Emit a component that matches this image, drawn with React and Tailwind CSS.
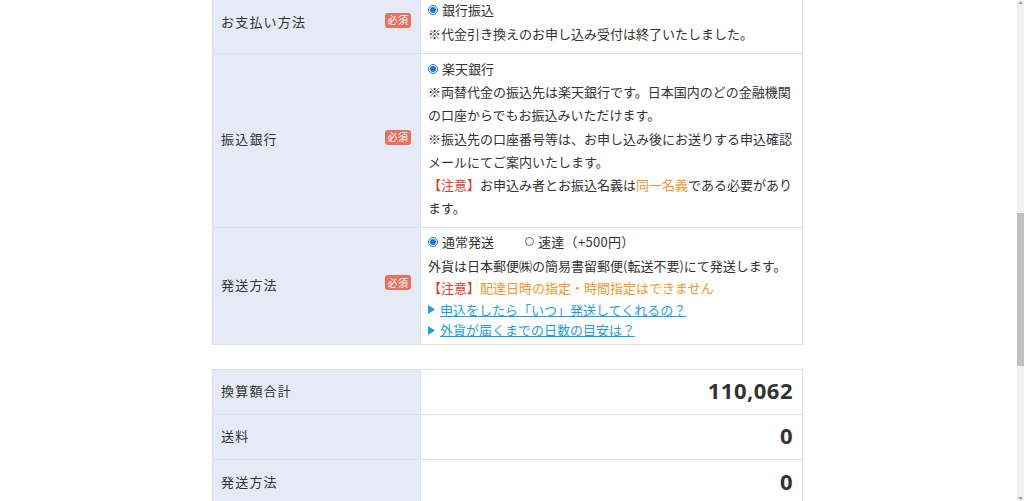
import React from "react";

function Badge() {
  return (
    <span className="flex h-[15px] w-[26px] items-center justify-center rounded-[3px] bg-[#e8705f] text-[10px] leading-none tracking-[0.5px] text-white mb-[3px]">
      必須
    </span>
  );
}

function Radio({ checked }) {
  if (checked) {
    return (
      <span className="mr-[4px] inline-flex h-[10px] w-[10px] shrink-0 items-center justify-center rounded-full border border-[#1a73e8] bg-white">
        <span className="h-[6px] w-[6px] rounded-full bg-[#1a73e8]" />
      </span>
    );
  }
  return <span className="mr-[4px] inline-block h-[9px] w-[9px] shrink-0 rounded-full border border-[#666] bg-white" />;
}

function Label({ children }) {
  return (
    <div className="flex w-[207px] shrink-0 items-center justify-between bg-[#e5eaf6] pb-[4px] pl-[8px] pr-[9px] text-[13px] tracking-[1.2px] text-[#333]">
      <span>{children}</span>
      <Badge />
    </div>
  );
}

function Tri() {
  return (
    <svg width="7" height="9" viewBox="0 0 7 9" className="mr-[5px] shrink-0">
      <path d="M0 0 L7 4.5 L0 9 Z" fill="#1e9fe0" />
    </svg>
  );
}

function SumRow({ label, value, last }) {
  return (
    <div className={"flex h-[45px] " + (last ? "" : "border-b border-[#dde0e5]")}>
      <div className="flex w-[207px] shrink-0 items-center bg-[#e5eaf6] pb-[3px] pl-[8px] text-[13px] tracking-[1.2px] text-[#333]">
        {label}
      </div>
      <div className="flex flex-1 items-center justify-end border-l border-[#dde0e5] pb-[3px] pr-[9px] font-['Open_Sans',sans-serif] text-[22px] font-bold tracking-[0.5px] text-[#333]">
        {value}
      </div>
    </div>
  );
}

export default function App() {
  return (
    <div className="flex h-[501px] w-[1024px] overflow-hidden bg-white font-['Noto_Sans_CJK_JP',sans-serif] text-[#333]">
      <div className="flex-1 pr-[2px]">
        <div className="mx-auto mt-[-7px] w-[591px]">
          <div className="border border-[#dde0e5]">
            <div className="flex border-b border-[#dde0e5]">
              <Label>お支払い方法</Label>
              <div className="flex-1 border-l border-[#dde0e5] pt-[4px] pb-[8px] pl-[7px] pr-[6px] text-[13px] leading-[23.5px]">
                <div className="flex items-center">
                  <Radio checked />
                  <span>銀行振込</span>
                </div>
                <div>※代金引き換えのお申し込み受付は終了いたしました。</div>
              </div>
            </div>
            <div className="flex border-b border-[#dde0e5]">
              <Label>振込銀行</Label>
              <div className="flex-1 border-l border-[#dde0e5] pt-[3px] pb-[8px] pl-[7px] pr-[6px] text-[13px] leading-[23.2px]">
                <div className="flex items-center">
                  <Radio checked />
                  <span>楽天銀行</span>
                </div>
                <div>
                  ※両替代金の振込先は楽天銀行です。日本国内のどの金融機関
                  <br />
                  の口座からでもお振込みいただけます。
                </div>
                <div>
                  ※振込先の口座番号等は、お申し込み後にお送りする申込確認
                  <br />
                  メールにてご案内いたします。
                </div>
                <div>
                  <span className="text-[#e53a2f]">【注意】</span>お申込み者とお振込名義は
                  <span className="text-[#f5962e]">同一名義</span>である必要があり
                  <br />
                  ます。
                </div>
              </div>
            </div>
            <div className="flex">
              <Label>発送方法</Label>
              <div className="flex-1 border-l border-[#dde0e5] pt-[1px] pb-[4px] pl-[7px] pr-[6px] text-[13px]">
                <div className="flex h-[25px] items-center">
                  <Radio checked />
                  <span>通常発送</span>
                  <span className="ml-[31px] flex items-center">
                    <Radio />
                    <span className="tracking-[0.3px]">速達（+500円）</span>
                  </span>
                </div>
                <div className="leading-[23px]">外貨は日本郵便㈱の簡易書留郵便(転送不要)にて発送します。</div>
                <div className="leading-[22px]">
                  <span className="text-[#e53a2f]">【注意】</span>
                  <span className="text-[#f5962e]">配達日時の指定・時間指定はできません</span>
                </div>
                <div className="flex items-center leading-[21px]">
                  <Tri />
                  <a className="text-[#1e9fe0] underline">申込をしたら「いつ」発送してくれるの？</a>
                </div>
                <div className="flex items-center leading-[20px]">
                  <Tri />
                  <a className="text-[#1e9fe0] underline">外貨が届くまでの日数の目安は？</a>
                </div>
              </div>
            </div>
          </div>

          <div className="mt-[24px] border border-[#dde0e5]">
            <SumRow label="換算額合計" value="110,062" />
            <SumRow label="送料" value="0" />
            <SumRow label="発送方法" value="0" last />
          </div>
        </div>
      </div>
      <div className="flex w-[7px] shrink-0 flex-col bg-[#f1f1f1]">
        <div className="flex h-[8px] items-start justify-center pt-[1px]">
          <svg width="5" height="3" viewBox="0 0 5 3"><path d="M0 3 L2.5 0 L5 3 Z" fill="#a3a3a3" /></svg>
        </div>
        <div className="mt-[205px] h-[153px] w-full bg-[#c1c1c1]" />
        <div className="flex-1" />
        <div className="flex h-[8px] items-end justify-center pb-[1px]">
          <svg width="5" height="3" viewBox="0 0 5 3"><path d="M0 0 L2.5 3 L5 0 Z" fill="#a3a3a3" /></svg>
        </div>
      </div>
    </div>
  );
}
